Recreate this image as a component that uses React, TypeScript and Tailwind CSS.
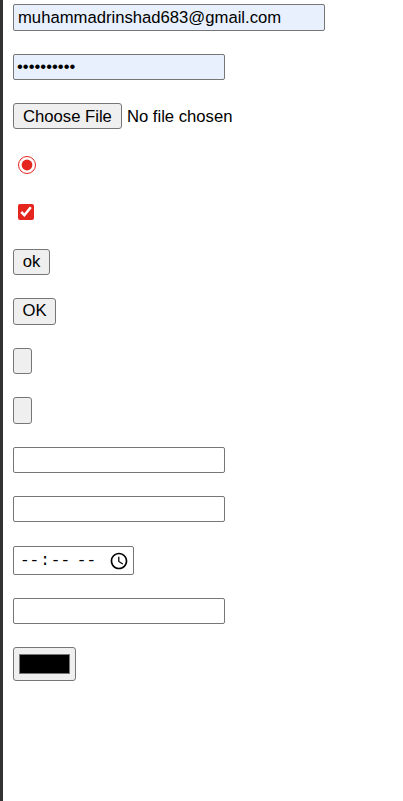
import React from "react";

const field =
  "block h-[26px] w-[212px] border border-[#767676] rounded-[2px] bg-white px-[3px] text-[16.67px] text-black outline-none";
const btn =
  "block h-[26px] border border-[#767676] rounded-[3px] bg-[#efefef] text-[16.67px] text-black leading-none";

export default function App() {
  return (
    <div className="min-h-screen border-l-[3px] border-[#333333] bg-white pl-[10px] font-['Liberation_Sans',Arial,sans-serif] text-black">
      <div className="flex flex-col items-start pt-[4px]">
        <input
          type="email"
          defaultValue="muhammadrinshad683@gmail.com"
          className="block h-[27px] w-[312px] border border-[#767676] rounded-[2px] bg-[#e8f0fe] px-[4px] text-[16.67px] text-black outline-none"
        />
        <input
          type="password"
          defaultValue="rinshad683"
          className="mt-[23px] block h-[26px] w-[212px] border border-[#767676] rounded-[2px] bg-[#e8f0fe] px-[3px] text-[16.67px] text-black outline-none"
        />
        <input
          type="file"
          className="mt-[23px] block h-[26px] w-[240px] text-[16.67px] text-black file:mr-[5px] file:h-[26px] file:rounded-[3px] file:border file:border-[#767676] file:bg-[#efefef] file:px-[9px] file:text-[16.67px] file:text-black"
        />
        <input
          type="radio"
          defaultChecked
          className="mt-[27px] ml-[5px] block h-[18px] w-[18px] accent-[#e5261f]"
        />
        <input
          type="checkbox"
          defaultChecked
          className="mt-[30px] ml-[5px] block h-[16px] w-[16px] accent-[#e5261f]"
        />
        <button className={`${btn} mt-[29px] w-[37px]`}>ok</button>
        <button className={`${btn} mt-[23px] h-[27px] w-[43px]`}>OK</button>
        <button className={`${btn} mt-[23px] w-[19px]`}></button>
        <button className={`${btn} mt-[23px] h-[27px] w-[19px]`}></button>
        <input type="text" className={`${field} mt-[23px]`} />
        <input type="text" className={`${field} mt-[23px]`} />
        <input
          type="time"
          className="mt-[24px] block h-[29px] w-[121px] border border-[#767676] rounded-[2px] bg-white pl-[5px] pr-[4px] font-['Liberation_Mono',monospace] text-[16px] text-black outline-none [&::-webkit-calendar-picker-indicator]:h-[20px] [&::-webkit-calendar-picker-indicator]:w-[20px] [&::-webkit-calendar-picker-indicator]:p-0"
        />
        <input type="text" className={`${field} mt-[23px]`} />
        <button className="mt-[23px] flex h-[34px] w-[63px] items-center justify-center border border-[#767676] rounded-[3px] bg-[#efefef]">
          <span className="block h-[20px] w-[51px] border border-[#777777] bg-black" />
        </button>
      </div>
    </div>
  );
}
